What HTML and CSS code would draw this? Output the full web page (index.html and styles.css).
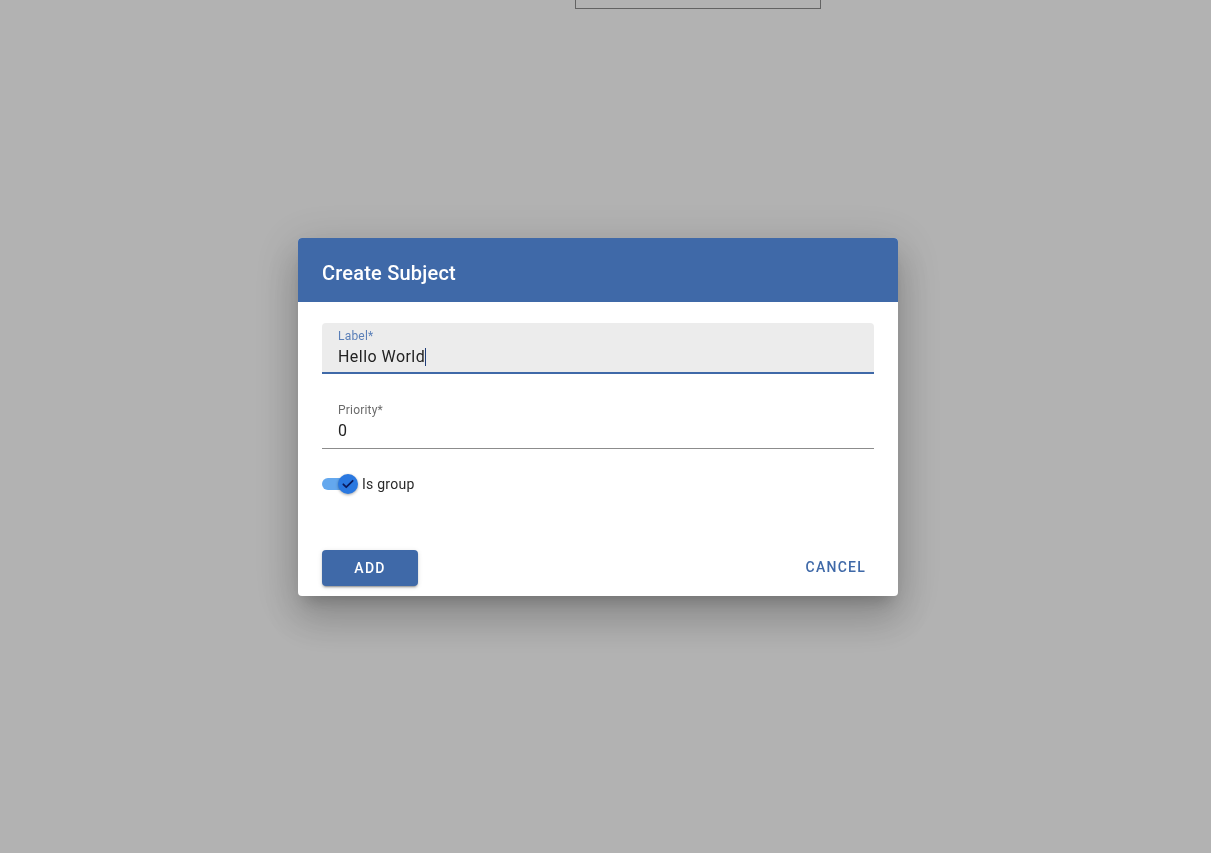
FILE: index.html
```html
<!DOCTYPE html>
<html lang="en">
<head>
<meta charset="utf-8">
<title>Create Subject</title>
<link rel="stylesheet" href="styles.css">
</head>
<body>
<div class="page">
  <div class="top-box"></div>
</div>
<div class="backdrop">
  <div class="dialog">
    <div class="dialog-header">
      <h2 class="dialog-title">Create Subject</h2>
    </div>
    <div class="dialog-content">
      <div class="field filled">
        <label class="field-label">Label*</label>
        <div class="field-value">Hello World<span class="caret"></span></div>
      </div>
      <div class="field standard">
        <label class="field-label">Priority*</label>
        <div class="field-value">0</div>
      </div>
      <div class="switch-row">
        <span class="switch">
          <span class="switch-track"></span>
          <span class="switch-thumb">
            <svg width="14" height="14" viewBox="0 0 24 24"><path d="M4 12.5l5 5L20 6.5" fill="none" stroke="#0b1a5c" stroke-width="3" stroke-linecap="round" stroke-linejoin="round"/></svg>
          </span>
        </span>
        <span class="switch-label">Is group</span>
      </div>
    </div>
    <div class="dialog-actions">
      <button class="btn btn-contained">Add</button>
      <button class="btn btn-text">Cancel</button>
    </div>
  </div>
</div>
</body>
</html>
```
FILE: styles.css
```css
html, body {
  margin: 0;
  padding: 0;
}
body {
  background: #ffffff;
  font-family: Roboto, "Liberation Sans", Arial, sans-serif;
  width: 1211px;
  height: 853px;
  overflow: hidden;
}
.page {
  height: 853px;
}
.top-box {
  margin-left: 575px;
  width: 244px;
  height: 8px;
  border: 1px solid #8f8f8f;
  border-top: none;
  background: #ffffff;
}
.backdrop {
  position: fixed;
  inset: 0;
  background: rgba(0, 0, 0, 0.3);
}
.dialog {
  margin-left: 298px;
  margin-top: 238px;
  width: 600px;
  background: #ffffff;
  border-radius: 4px;
  box-shadow: 0 11px 15px -7px rgba(0,0,0,0.2), 0 24px 38px 3px rgba(0,0,0,0.14), 0 9px 46px 8px rgba(0,0,0,0.12);
  overflow: hidden;
}
.dialog-header {
  background: #3f69a8;
  height: 64px;
  padding: 0 24px;
  display: flex;
  align-items: center;
}
.dialog-title {
  margin: 0;
  color: #ffffff;
  font-size: 20px;
  font-weight: 500;
  line-height: 24px;
  letter-spacing: 0.2px;
  padding-top: 6px;
}
.dialog-content {
  padding: 21px 24px 0;
}
.field {
  display: flex;
  flex-direction: column;
}
.field.filled {
  background: #ececec;
  border-radius: 4px 4px 0 0;
  padding: 6px 16px 6px;
  border-bottom: 2px solid #3f69a8;
}
.field.filled .field-label {
  color: #5a7fb8;
}
.field.standard {
  margin-top: 24px;
  padding: 5px 16px 8px;
  border-bottom: 1px solid #8c8c8c;
}
.field.standard .field-label {
  color: #6b6b6b;
}
.field-label {
  font-size: 12px;
  line-height: 14px;
  letter-spacing: 0.2px;
}
.field-value {
  margin-top: 3px;
  padding-top: 1px;
  font-size: 16px;
  line-height: 19px;
  color: #222222;
  letter-spacing: 0.45px;
  display: flex;
  align-items: center;
}
.caret {
  display: inline-block;
  width: 1px;
  height: 18px;
  background: #1f3d78;
  margin-left: 0;
}
.switch-row {
  margin-top: 24px;
  height: 22px;
  display: flex;
  align-items: center;
}
.switch {
  position: relative;
  width: 36px;
  height: 22px;
  display: inline-block;
}
.switch-track {
  position: absolute;
  left: 0;
  top: 5px;
  width: 34px;
  height: 12px;
  border-radius: 6px;
  background: #64a8ee;
}
.switch-thumb {
  position: absolute;
  left: 16px;
  top: 1px;
  width: 20px;
  height: 20px;
  border-radius: 50%;
  background: #2a78e0;
  box-shadow: 0 1px 3px rgba(0,0,0,0.35);
  display: flex;
  align-items: center;
  justify-content: center;
}
.switch-label {
  margin-left: 4px;
  font-size: 14px;
  color: #2a2a2a;
  letter-spacing: 0.25px;
}
.dialog-actions {
  display: flex;
  justify-content: space-between;
  align-items: center;
  padding: 55px 24px 10px;
}
.btn {
  font-family: Roboto, "Liberation Sans", Arial, sans-serif;
  font-size: 14px;
  font-weight: 500;
  letter-spacing: 1.25px;
  text-transform: uppercase;
  border: none;
  border-radius: 4px;
  height: 36px;
  padding-bottom: 2px;
  cursor: pointer;
}
.btn-contained {
  width: 96px;
  background: #3f69a8;
  color: #ffffff;
  box-shadow: 0 3px 1px -2px rgba(0,0,0,0.2), 0 2px 2px 0 rgba(0,0,0,0.14), 0 1px 5px 0 rgba(0,0,0,0.12);
}
.btn-text {
  background: transparent;
  color: #3f69a8;
  padding: 0 8px 2px;
}
```
